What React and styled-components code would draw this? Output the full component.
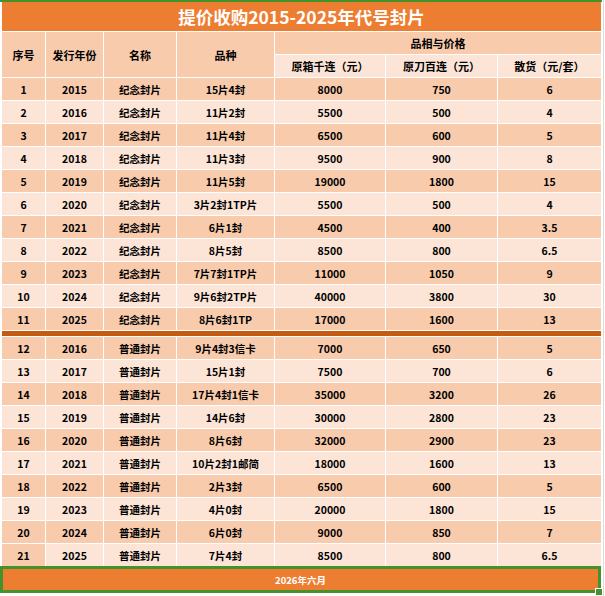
import React from "react";
import styled, { createGlobalStyle } from "styled-components";

const GlobalStyle = createGlobalStyle`
  html, body { margin: 0; padding: 0; background: #fff; }
  body { font-family: "Noto Sans CJK SC", "Microsoft YaHei", sans-serif; }
`;

const tones = {
  dark: "#f8cbad",
  light: "#fce4d6",
};

const commemorative = [
  [1, 2015, "纪念封片", "15片4封", 8000, 750, 6],
  [2, 2016, "纪念封片", "11片2封", 5500, 500, 4],
  [3, 2017, "纪念封片", "11片4封", 6500, 600, 5],
  [4, 2018, "纪念封片", "11片3封", 9500, 900, 8],
  [5, 2019, "纪念封片", "11片5封", 19000, 1800, 15],
  [6, 2020, "纪念封片", "3片2封1TP片", 5500, 500, 4],
  [7, 2021, "纪念封片", "6片1封", 4500, 400, 3.5],
  [8, 2022, "纪念封片", "8片5封", 8500, 800, 6.5],
  [9, 2023, "纪念封片", "7片7封1TP片", 11000, 1050, 9],
  [10, 2024, "纪念封片", "9片6封2TP片", 40000, 3800, 30],
  [11, 2025, "纪念封片", "8片6封1TP", 17000, 1600, 13],
];

const ordinary = [
  [12, 2016, "普通封片", "9片4封3信卡", 7000, 650, 5],
  [13, 2017, "普通封片", "15片1封", 7500, 700, 6],
  [14, 2018, "普通封片", "17片4封1信卡", 35000, 3200, 26],
  [15, 2019, "普通封片", "14片6封", 30000, 2800, 23],
  [16, 2020, "普通封片", "8片6封", 32000, 2900, 23],
  [17, 2021, "普通封片", "10片2封1邮简", 18000, 1600, 13],
  [18, 2022, "普通封片", "2片3封", 6500, 600, 5],
  [19, 2023, "普通封片", "4片0封", 20000, 1800, 15],
  [20, 2024, "普通封片", "6片0封", 9000, 850, 7],
  [21, 2025, "普通封片", "7片4封", 8500, 800, 6.5],
];

const Page = styled.div`
  width: 603px;
  height: 596px;
  border-right: 1px solid #dadada;
  position: relative;
`;

const TopLine = styled.div`
  height: 2px;
  width: 602px;
  background: #43922c;
`;

const Sheet = styled.div`
  margin-left: 2px;
  width: 598px;
  display: grid;
  grid-template-columns: 43px 57px 72px 97px 110px 111px 103px;
  grid-auto-rows: auto;
  gap: 1px;
  background: #fff;
`;

const Title = styled.div`
  grid-column: 1 / -1;
  height: 29px;
  background: #ed7d31;
  color: #fff;
  font-size: 17.5px;
  font-weight: 700;
  display: flex;
  align-items: center;
  justify-content: center;
`;

const Cell = styled.div`
  min-height: 22px;
  background: ${(p) => tones[p.$tone]};
  color: #000;
  font-size: 10.5px;
  font-weight: 700;
  display: flex;
  align-items: center;
  justify-content: center;
  white-space: nowrap;
  grid-row: ${(p) => (p.$rows ? `span ${p.$rows}` : "auto")};
  grid-column: ${(p) => (p.$cols ? `span ${p.$cols}` : "auto")};
`;

const HeadCell = styled(Cell)`
  font-size: 11px;
`;

const Divider = styled.div`
  grid-column: 1 / -1;
  height: 5px;
  background: #c55a11;
`;

const Footer = styled.div`
  width: 595px;
  height: 21px;
  border: 3px solid #43922c;
  background: #ed7d31;
  color: #fff;
  font-size: 9.5px;
  font-weight: 700;
  display: flex;
  align-items: center;
  justify-content: center;
  position: relative;
`;

const Handle = styled.span`
  position: absolute;
  right: -5px;
  bottom: -6px;
  width: 6px;
  height: 6px;
  background: #43922c;
  border: 1px solid #fff;
`;

const DataRow = ({ row, tone, firstTone }) => (
  <>
    {row.map((v, i) => (
      <Cell key={i} $tone={i === 0 && firstTone ? firstTone : tone}>
        {v}
      </Cell>
    ))}
  </>
);

export default function App() {
  return (
    <>
      <GlobalStyle />
      <Page>
        <TopLine />
        <Sheet>
          <Title>提价收购2015-2025年代号封片</Title>
          <HeadCell $tone="dark" $rows={2}>序号</HeadCell>
          <HeadCell $tone="dark" $rows={2}>发行年份</HeadCell>
          <HeadCell $tone="dark" $rows={2}>名称</HeadCell>
          <HeadCell $tone="dark" $rows={2}>品种</HeadCell>
          <HeadCell $tone="dark" $cols={3}>品相与价格</HeadCell>
          <HeadCell $tone="light">原箱千连（元）</HeadCell>
          <HeadCell $tone="light">原刀百连（元）</HeadCell>
          <HeadCell $tone="light">散货（元/套）</HeadCell>
          {commemorative.map((r, i) => (
            <DataRow key={r[0]} row={r} tone={i % 2 === 0 ? "dark" : "light"} />
          ))}
          <Divider />
          {ordinary.map((r, i) => (
            <DataRow
              key={r[0]}
              row={r}
              tone={i % 2 === 0 ? "dark" : "light"}
              firstTone={r[0] === 21 ? "dark" : null}
            />
          ))}
        </Sheet>
        <Footer>
          2026年六月
          <Handle />
        </Footer>
      </Page>
    </>
  );
}
